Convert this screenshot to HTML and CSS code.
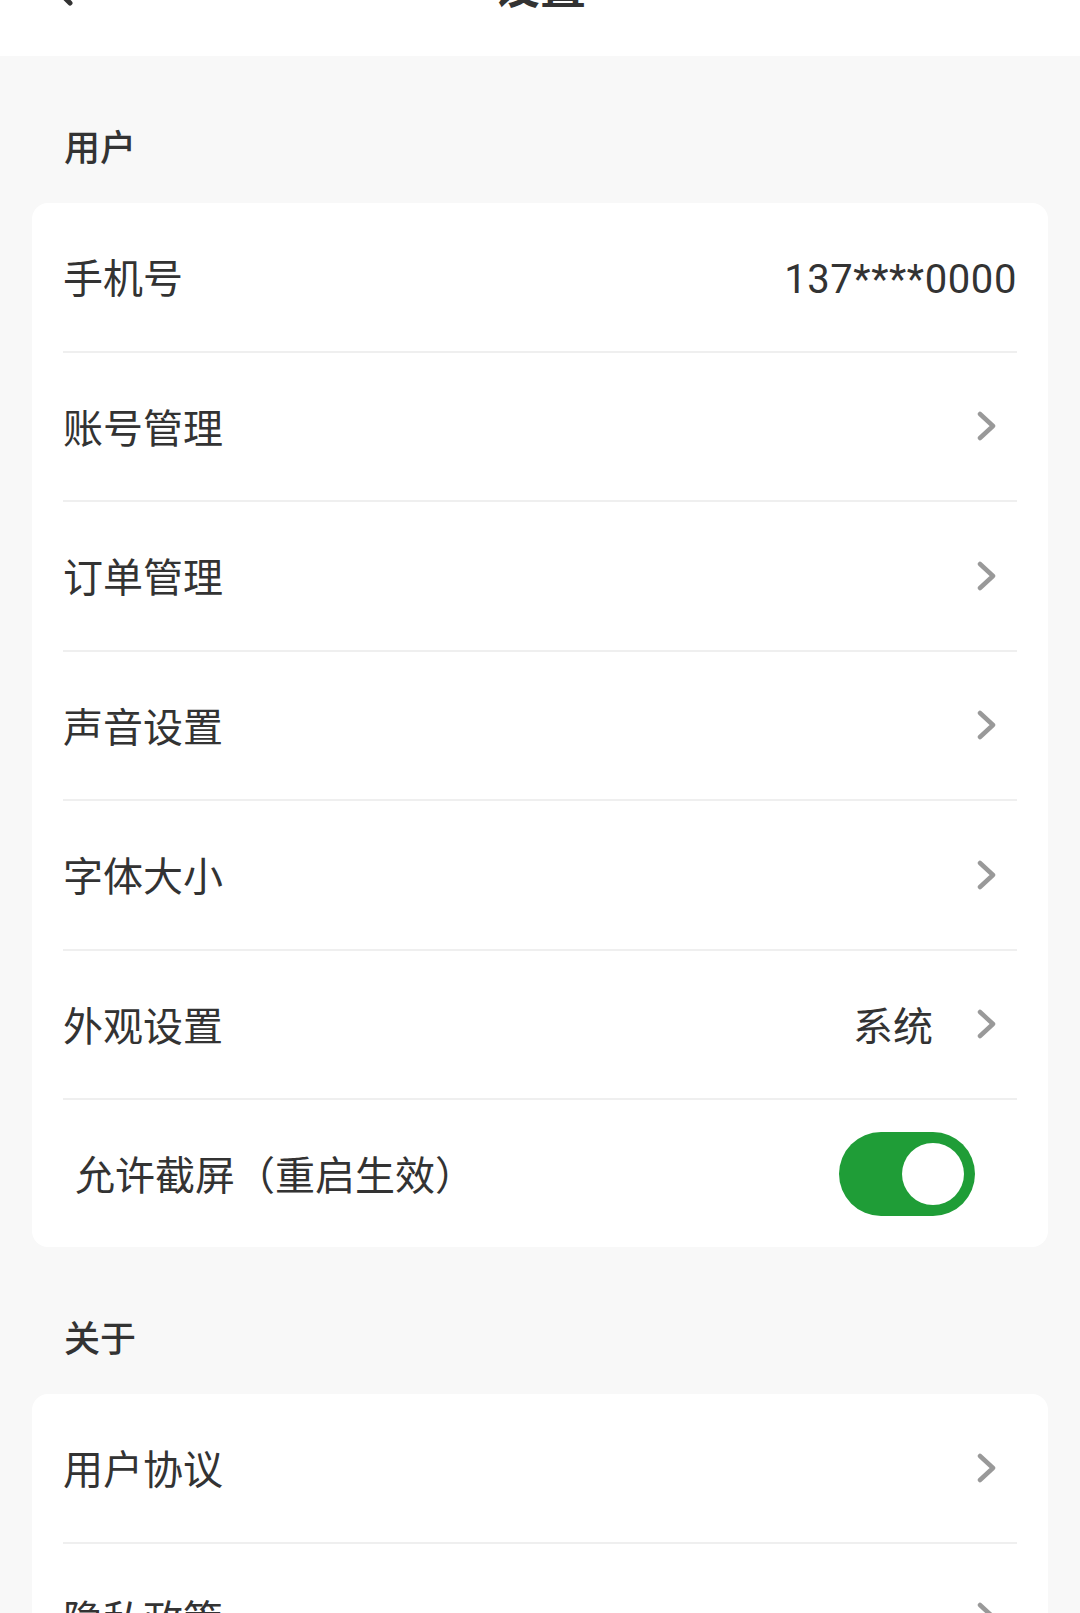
FILE: index.html
```html
<!DOCTYPE html>
<html lang="zh-CN">
<head>
  <meta charset="UTF-8">
  <meta name="viewport" content="width=device-width, initial-scale=1.0">
  <title>设置</title>
  <link rel="stylesheet" href="styles.css">
</head>
<body>
  <header class="nav">
    <svg class="nav-back" width="28" height="44" viewBox="0 0 28 44">
      <polyline points="24,3 5,22 24,41" fill="none" stroke="#333" stroke-width="5" stroke-linecap="round" stroke-linejoin="round"/>
    </svg>
    <h1 class="nav-title">设置</h1>
    <span></span>
  </header>

  <main>
    <h2 class="section-title">用户</h2>
    <section class="card">
      <div class="row">
        <span class="row-label">手机号</span>
        <span class="row-value phone">137****0000</span>
      </div>
      <div class="row">
        <span class="row-label">账号管理</span>
        <svg class="row-arrow" width="20" height="30" viewBox="0 0 20 30"><polyline points="3,3 16,15 3,27"/></svg>
      </div>
      <div class="row">
        <span class="row-label">订单管理</span>
        <svg class="row-arrow" width="20" height="30" viewBox="0 0 20 30"><polyline points="3,3 16,15 3,27"/></svg>
      </div>
      <div class="row">
        <span class="row-label">声音设置</span>
        <svg class="row-arrow" width="20" height="30" viewBox="0 0 20 30"><polyline points="3,3 16,15 3,27"/></svg>
      </div>
      <div class="row">
        <span class="row-label">字体大小</span>
        <svg class="row-arrow" width="20" height="30" viewBox="0 0 20 30"><polyline points="3,3 16,15 3,27"/></svg>
      </div>
      <div class="row">
        <span class="row-label">外观设置</span>
        <span class="row-value with-arrow">系统</span>
        <svg class="row-arrow" width="20" height="30" viewBox="0 0 20 30"><polyline points="3,3 16,15 3,27"/></svg>
      </div>
      <div class="row row-switch">
        <span class="row-label">允许截屏（重启生效）</span>
        <span class="switch on"><span class="switch-knob"></span></span>
      </div>
    </section>

    <h2 class="section-title">关于</h2>
    <section class="card">
      <div class="row">
        <span class="row-label">用户协议</span>
        <svg class="row-arrow" width="20" height="30" viewBox="0 0 20 30"><polyline points="3,3 16,15 3,27"/></svg>
      </div>
      <div class="row">
        <span class="row-label">隐私政策</span>
        <svg class="row-arrow" width="20" height="30" viewBox="0 0 20 30"><polyline points="3,3 16,15 3,27"/></svg>
      </div>
      <div class="row">
        <span class="row-label">关于我们</span>
        <svg class="row-arrow" width="20" height="30" viewBox="0 0 20 30"><polyline points="3,3 16,15 3,27"/></svg>
      </div>
    </section>
  </main>
</body>
</html>
```

FILE: styles.css
```css
* {
  box-sizing: border-box;
}
body {
  margin: 0;
  background-color: #f8f8f8;
  color: #333;
  font-family: Roboto, "Noto Sans CJK SC", sans-serif;
}

/* 顶部导航 */
.nav {
  height: 56px;
  background-color: #fff;
  overflow: hidden;
  display: grid;
  grid-template-columns: 1fr auto 1fr;
  align-items: start;
}
.nav-back {
  margin: -38px 0 0 46px;
}
.nav-title {
  margin: -36px 0 0;
  font-size: 46px;
  line-height: 46px;
  font-weight: 700;
}

/* 分组标题 */
.section-title {
  margin: 0;
  padding: 75px 64px 36px;
  font-size: 36px;
  line-height: 36px;
  font-weight: 500;
}

/* 卡片和行 */
.card {
  margin: 0 32px;
  background-color: #fff;
  border-radius: 16px;
}
.row {
  height: 149.5px;
  margin: 0 31px;
  border-bottom: 2px solid #efefef;
  display: flex;
  align-items: center;
  font-size: 40px;
  line-height: 40px;
}
.row:last-child {
  height: 147px;
  border-bottom: none;
}
.row-label,
.row-value {
  padding-top: 7px;
}
.row-label {
  flex: 1;
}
.row-value.with-arrow {
  margin-right: 44px;
}
.phone {
  letter-spacing: 0.6px;
}
.row-arrow {
  margin-right: 20px;
}
.row-arrow polyline {
  fill: none;
  stroke: #999;
  stroke-width: 4.5;
  stroke-linecap: round;
  stroke-linejoin: round;
}

/* 开关 */
.row-switch .row-label {
  padding-left: 12px;
}
.switch {
  width: 136px;
  height: 84px;
  margin-right: 42px;
  padding: 11px;
  border-radius: 42px;
  background-color: #ccc;
  display: flex;
  align-items: center;
}
.switch.on {
  background-color: #1f9d37;
  justify-content: flex-end;
}
.switch-knob {
  width: 62px;
  height: 62px;
  border-radius: 50%;
  background-color: #fff;
}
```
